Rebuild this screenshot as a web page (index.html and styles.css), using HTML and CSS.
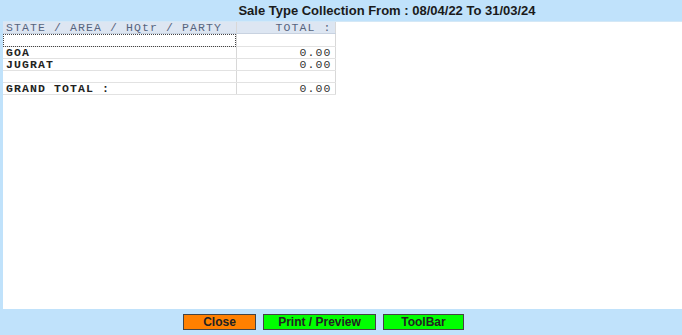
FILE: index.html
```html
<!DOCTYPE html>
<html lang="en">
<head>
<meta charset="utf-8">
<title>Sale Type Collection</title>
<link rel="stylesheet" href="styles.css">
</head>
<body>

<!-- Title bar -->
<div class="titlebar">Sale Type Collection From : 08/04/22 To 31/03/24</div>

<!-- Report grid -->
<div class="report">
  <table class="grid">
    <tr class="head">
      <th class="col-name">STATE / AREA / HQtr / PARTY</th>
      <th class="col-total">TOTAL :</th>
    </tr>
    <tr>
      <td class="focus"></td>
      <td></td>
    </tr>
    <tr>
      <td>GOA</td>
      <td class="num">0.00</td>
    </tr>
    <tr>
      <td>JUGRAT</td>
      <td class="num">0.00</td>
    </tr>
    <tr>
      <td></td>
      <td></td>
    </tr>
    <tr>
      <td>GRAND TOTAL :</td>
      <td class="num">0.00</td>
    </tr>
  </table>
</div>

<!-- Buttons -->
<div class="footer">
  <button class="btn close">Close</button>
  <button class="btn green print">Print / Preview</button>
  <button class="btn green toolbar">ToolBar</button>
</div>

</body>
</html>
```

FILE: styles.css
```css
/* ======== Page ======== */
* {
  box-sizing: border-box;
  margin: 0;
  padding: 0;
}

body {
  display: flex;
  flex-direction: column;
  width: 682px;
  height: 335px;
  background: #c0e2fb;
  font-family: "Liberation Sans", Arial, sans-serif;
  overflow: hidden;
}

/* ======== Title ======== */
.titlebar {
  height: 21px;
  padding-left: 92px;
  line-height: 21px;
  text-align: center;
  font-size: 13px;
  font-weight: 700;
  color: #1a1a1a;
}

/* ======== Report area ======== */
.report {
  height: 288px;
  margin-left: 3px;
  background: #fff;
  border-top: 1px solid #d4e8f6;
}

.grid {
  border-collapse: collapse;
  font-family: "Liberation Mono", "Courier New", monospace;
  font-size: 11.5px;
  letter-spacing: 1.1px;
}

.grid th,
.grid td {
  height: 12px;
  padding: 0 3px;
  border-right: 1px solid #d8d8d8;
  border-bottom: 1px solid #e2e2e2;
  line-height: 11px;
  white-space: nowrap;
}

.grid td {
  font-weight: 700;
  color: #222;
}

.grid .head th {
  height: 11px;
  background: #dde6f2;
  font-weight: 400;
  color: #56647e;
  border-bottom: 1px solid #c8d2e0;
}

.col-name {
  width: 233px;
  text-align: left;
}

.col-total {
  width: 99px;
  text-align: right;
}

.grid td.num {
  font-weight: 400;
  text-align: right;
  color: #333;
}

.grid td.focus {
  height: 13px;
  outline: 1px dotted #444;
  outline-offset: -1px;
}

/* ======== Buttons ======== */
.footer {
  display: flex;
  align-items: center;
  gap: 7px;
  flex-grow: 1;
  padding-left: 183px;
}

.btn {
  height: 16px;
  font-family: "Liberation Sans", Arial, sans-serif;
  font-size: 12px;
  font-weight: 700;
  color: #222;
  border: 1px solid #444;
}

.btn.close   { width: 73px; background: #ff8000; }
.btn.green   { background: #00ff00; }
.btn.print   { width: 113px; }
.btn.toolbar { width: 81px; }
```
